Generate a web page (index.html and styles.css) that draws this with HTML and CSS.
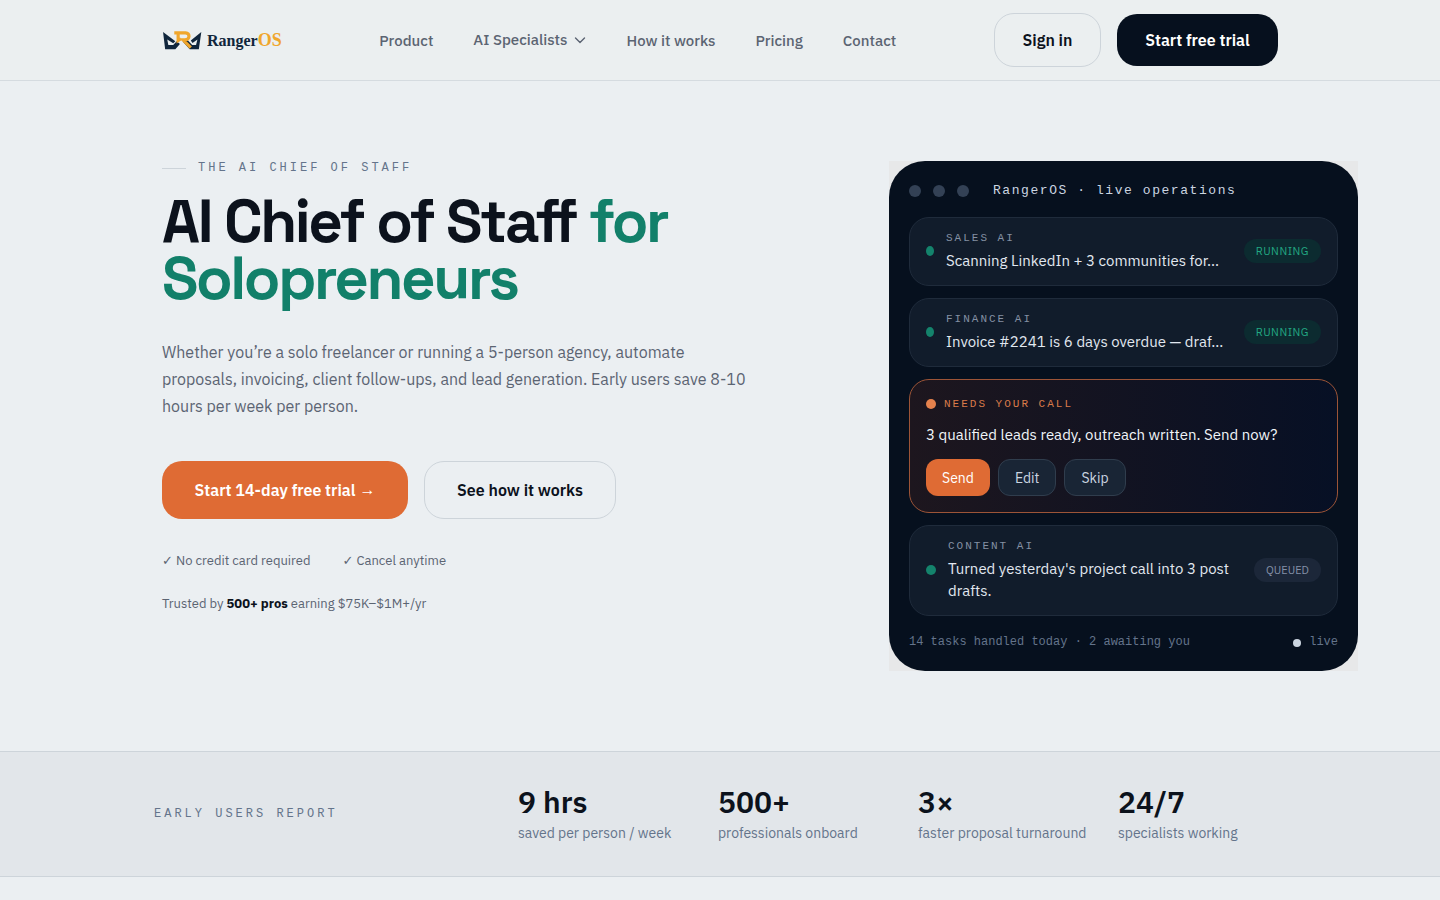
FILE: index.html
```html
<!DOCTYPE html>
<html lang="en">
<head>
<meta charset="utf-8">
<meta name="viewport" content="width=device-width, initial-scale=1">
<title>RangerOS</title>
<link rel="stylesheet" href="styles.css">
</head>
<body>
<header class="site-header">
  <div class="header-inner">
    <a class="logo" href="#" aria-label="RangerOS">
      <svg class="logo-mark" viewBox="0 0 114 57" aria-hidden="true">
        <path fill="#10263c" d="M3 6 38 32 32 38 15 27 18 43H32L42 32 51 40 38 55H9Z"/>
        <path fill="#10263c" d="M112 6 82 30 87 37 101 27 97 43H86L70 26 59 33 79 55H105Z"/>
        <path fill="none" stroke="#f0a62c" stroke-width="9" d="M35 8H67Q77 9 77 18 76 27 66 28H60L82 50M46 10V30L54 25"/>
      </svg>
      <span class="logo-name">Ranger<span class="logo-os">OS</span></span>
    </a>
    <nav class="nav">
      <a href="#">Product</a>
      <button class="nav-menu" type="button">AI Specialists
        <svg viewBox="0 0 12 12" aria-hidden="true"><path d="M1.500 4 6 8.500 10.500 4"/></svg>
      </button>
      <a href="#">How it works</a>
      <a href="#">Pricing</a>
      <a href="#">Contact</a>
    </nav>
    <div class="header-actions">
      <a class="btn btn-outline sign-in" href="#">Sign in</a>
      <a class="btn btn-dark" href="#">Start free trial</a>
    </div>
  </div>
</header>
<main>
  <section class="hero">
    <div class="hero-copy">
      <p class="eyebrow hero-eyebrow">The AI Chief of Staff</p>
      <h1>AI Chief of Staff <span>for Solopreneurs</span></h1>
      <p class="lead">Whether you’re a solo freelancer or running a 5-person agency, automate proposals, invoicing, client follow-ups, and lead generation. Early users save 8-10 hours per week per person.</p>
      <div class="cta-row">
        <a class="btn btn-large btn-orange" href="#">Start 14-day free trial <span class="arrow">→</span></a>
        <a class="btn btn-large btn-outline tour" href="#">See how it works</a>
      </div>
      <ul class="notes">
        <li><span class="check">✓</span> No credit card required</li>
        <li><span class="check">✓</span> Cancel anytime</li>
      </ul>
      <p class="trusted">Trusted by <strong>500+ pros</strong> earning $75K–$1M+/yr</p>
    </div>
    <div class="panel-frame">
      <div class="panel">
        <div class="panel-head">
          <span class="window-dot"></span><span class="window-dot"></span><span class="window-dot"></span>
          <span class="panel-title">RangerOS · live operations</span>
        </div>
        <article class="task">
          <span class="status-dot small"></span>
          <div class="task-body"><h2 class="tag">Sales AI</h2><p>Scanning LinkedIn + 3 communities for…</p></div>
          <span class="badge running">RUNNING</span>
        </article>
        <article class="task">
          <span class="status-dot small"></span>
          <div class="task-body"><h2 class="tag">Finance AI</h2><p>Invoice #2241 is 6 days overdue — draf…</p></div>
          <span class="badge running">RUNNING</span>
        </article>
        <article class="alert">
          <h2 class="tag alert-tag"><span class="status-dot warn"></span>Needs your call</h2>
          <p>3 qualified leads ready, outreach written. Send now?</p>
          <div class="alert-actions">
            <button class="chip chip-primary" type="button">Send</button>
            <button class="chip" type="button">Edit</button>
            <button class="chip" type="button">Skip</button>
          </div>
        </article>
        <article class="task">
          <span class="status-dot"></span>
          <div class="task-body"><h2 class="tag">Content AI</h2><p>Turned yesterday's project call into 3 post drafts.</p></div>
          <span class="badge">QUEUED</span>
        </article>
        <div class="panel-foot">
          <span>14 tasks handled today · 2 awaiting you</span>
          <span class="live">live</span>
        </div>
      </div>
    </div>
  </section>
  <section class="stats">
    <div class="stats-inner">
      <p class="eyebrow">Early users report</p>
      <div class="stat"><strong>9 hrs</strong><span>saved per person / week</span></div>
      <div class="stat"><strong>500+</strong><span>professionals onboard</span></div>
      <div class="stat"><strong>3×</strong><span>faster proposal turnaround</span></div>
      <div class="stat"><strong>24/7</strong><span>specialists working</span></div>
    </div>
  </section>
</main>
</body>
</html>
```
FILE: styles.css
```css
:root {
  --ink: #0c121c;
  --navy: #06101e;
  --slate: #5b6472;
  --muted: #64748b;
  --line: #cdd4da;
  --green: #12806a;
  --orange: #df6b34;
  --sans: "IBM Plex Sans", Roboto, "Noto Sans", sans-serif;
  --mono: "Liberation Mono", monospace;
}
* { box-sizing: border-box; }
body { margin: 0; background: #ebeff2; color: var(--ink); font-family: var(--sans); font-size: 16px; }
h1, h2, p, ul { margin: 0; padding: 0; }
a { color: inherit; text-decoration: none; }
button { font: inherit; cursor: pointer; }

.site-header { background: #ebeff0; border-bottom: 1px solid #d5dbe0; }
.header-inner { display: flex; align-items: center; justify-content: space-between; max-width: 1116px; min-height: 80px; margin: 0 auto; }
.logo { display: flex; align-items: center; gap: 5px; }
.logo-mark { width: 40px; height: 20px; }
.logo-name { color: #10263c; font: bold 16px/20px "Liberation Serif", serif; }
.logo-os { color: #f0a62c; font-size: 18px; }
.nav { display: flex; justify-content: space-between; width: 517px; padding-top: 1px; color: var(--slate); font-size: 15px; font-weight: 500; line-height: 22px; }
.nav-menu { display: flex; align-items: center; gap: 7px; padding: 0; border: 0; background: none; color: inherit; line-height: 20px; height: 20px; }
.nav-menu svg { width: 12px; height: 12px; fill: none; stroke: currentColor; stroke-width: 1.4; stroke-linecap: round; stroke-linejoin: round; }
.header-actions { display: flex; align-items: center; gap: 16px; }
.btn { display: flex; align-items: center; justify-content: center; height: 52px; border-radius: 20px; font-size: 16px; font-weight: 600; line-height: 24px; white-space: nowrap; }
.btn-outline { border: 1px solid var(--line); }
.btn-dark { width: 161px; background: var(--navy); color: #fff; }
.sign-in { width: 107px; height: 54px; }
.btn-large { gap: 4px; height: 58px; }
.btn-orange { width: 246px; background: var(--orange); color: #fff; }
.arrow { font-family: "Liberation Sans", sans-serif; }
.check { font-family: "DejaVu Sans", sans-serif; }
.tour { width: 192px; }

.hero { display: grid; grid-template-columns: 1fr 469px; gap: 140px; max-width: 1276px; margin: 0 auto; padding: 80px 0 80px 80px; }
.eyebrow { color: var(--muted); font: 12px/14px var(--mono); letter-spacing: 3px; text-transform: uppercase; }
.hero-eyebrow { display: flex; align-items: center; gap: 12px; }
.hero-eyebrow::before { content: ""; width: 24px; height: 1px; background: var(--line); }
h1 { margin-top: 18px; font-family: "Space Grotesk", Inter, sans-serif; font-size: 60px; font-weight: 600; line-height: 57px; letter-spacing: -0.04em; }
h1 span { color: var(--green); }
.lead { margin-top: 32px; color: var(--slate); line-height: 27px; }
.cta-row { display: flex; gap: 16px; margin-top: 41px; }
.notes { display: flex; gap: 32px; margin-top: 32px; color: var(--slate); font-size: 13px; line-height: 20px; list-style: none; }
.trusted { margin-top: 23px; color: var(--slate); font-size: 13px; line-height: 20px; }
.trusted strong { color: var(--ink); }

.panel-frame { background: #e7e8e9; }
.panel { display: flex; flex-direction: column; gap: 12px; padding: 20px; border-radius: 36px; background: var(--navy); color: #e2e8f0; }
.panel-head { display: flex; align-items: center; gap: 12px; height: 20px; margin-bottom: 4px; }
.window-dot { width: 12px; height: 12px; border-radius: 50%; background: #334155; }
.panel-title { margin-left: 12px; color: #cbd5e1; font: 13px/18px var(--mono); letter-spacing: 0.12em; }
.task, .alert { border: 1px solid #1f2b3b; border-radius: 20px; background: #111c2b; font-size: 15px; line-height: 22px; }
.task { display: flex; align-items: center; gap: 12px; padding: 12px 16px 13px; }
.task-body { flex: 1; }
.tag { margin-bottom: 3px; color: #8490a3; font: 11px/17px var(--mono); letter-spacing: 2px; text-transform: uppercase; }
.status-dot { flex: none; width: 10px; height: 10px; border-radius: 50%; background: #14836c; }
.small { width: 8px; }
.warn { background: #e5824d; }
.badge { padding: 0 12px; border-radius: 12px; background: #1c2739; color: #8490a8; font-size: 11px; line-height: 24px; }
.running { background: #0c2b30; color: #22a883; letter-spacing: 0.5px; }
.alert { padding: 16px; border-color: #9c5437; background: linear-gradient(90deg, #1d161e, #071025); color: #f1f5f9; }
.alert-tag { display: flex; align-items: center; gap: 8px; margin: 0 0 12px; color: #d97b4a; line-height: 16px; }
.alert-actions { display: flex; gap: 8px; margin-top: 13px; }
.chip { height: 37px; padding: 0 16px; border: 1px solid #303d4d; border-radius: 12px; background: #192535; color: #cbd5e1; font-size: 14px; }
.chip-primary { border: 0; background: var(--orange); color: #fff; }
.panel-foot { display: flex; justify-content: space-between; padding-top: 6px; color: #64748b; font: 12px/17px var(--mono); }
.live { display: flex; align-items: center; gap: 8px; }
.live::before { content: ""; width: 8px; height: 8px; border-radius: 50%; background: #cbd5e1; }

.stats { border: solid var(--line); border-width: 1px 0; background: #e2e6ea; }
.stats-inner { display: grid; grid-template-columns: 1fr repeat(4, 168px); gap: 32px; align-items: center; max-width: 1132px; margin: 0 auto; padding: 32px 0; }
.stat strong { display: block; margin-bottom: 2px; font-size: 30px; font-weight: 600; line-height: 36px; }
.stat span { display: block; color: var(--muted); font-size: 14px; line-height: 22px; white-space: nowrap; }
```
